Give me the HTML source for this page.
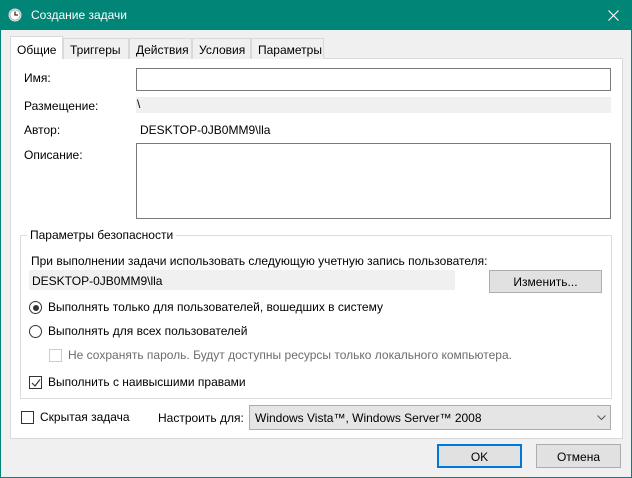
<!DOCTYPE html>
<html><head><meta charset="utf-8"><style>
*{margin:0;padding:0;box-sizing:border-box}
body{width:632px;height:478px;background:#f0f0f0;font:12px "Liberation Sans",sans-serif;color:#000;position:relative;overflow:hidden}
.a{position:absolute;white-space:nowrap}
.win{position:absolute;left:0;top:0;width:632px;height:478px;border:1px solid #008577}
.title{position:absolute;left:0;top:0;width:632px;height:30px;background:#008577;color:#fff;font-size:12px}
.tab{position:absolute;top:38px;height:21px;border:1px solid #d9d9d9;border-bottom:none;background:#f0f0f0;padding:4px 0 0 6px}
.panel{position:absolute;left:10px;top:58px;width:613px;height:381px;background:#fff;border:1px solid #d9d9d9}
.inp{position:absolute;background:#fff;border:1px solid #7a7a7a}
.gray{position:absolute;background:#f0f0f0}
.btn{position:absolute;background:#e1e1e1;border:1px solid #adadad;text-align:center}
.radio{position:absolute;width:13px;height:13px;border:1px solid #333;border-radius:50%;background:#fff}
.cb{position:absolute;width:13px;height:13px;border:1px solid #333;background:#fff}
</style></head><body>
<div class="win"></div>
<div class="title">
 <svg class="a" style="left:8px;top:8px" width="14" height="14" viewBox="0 0 14 14"><circle cx="7" cy="7" r="6.5" fill="#ddd"/><circle cx="7" cy="7" r="5" fill="#fff" stroke="#999" stroke-width=".6"/><path d="M7 3.5V7H10" stroke="#333" stroke-width="1.3" fill="none"/></svg>
 <div class="a" style="left:31px;top:8px">Создание задачи</div>
 <svg class="a" style="left:608px;top:10px" width="11" height="11" viewBox="0 0 11 11"><path d="M0.5 0.5L10.5 10.5M10.5 0.5L0.5 10.5" stroke="#fff" stroke-width="1.1"/></svg>
</div>
<div class="panel"></div>
<div class="tab" style="left:10px;top:36px;height:23px;width:53px;background:#fff;padding-top:6px">Общие</div>
<div class="tab" style="left:63px;width:66px">Триггеры</div>
<div class="tab" style="left:129px;width:63px">Действия</div>
<div class="tab" style="left:192px;width:59px">Условия</div>
<div class="tab" style="left:251px;width:73px">Параметры</div>

<div class="a" style="left:24px;top:71px">Имя:</div>
<div class="inp" style="left:136px;top:68px;width:475px;height:23px"></div>
<div class="a" style="left:24px;top:99px">Размещение:</div>
<div class="gray" style="left:136px;top:97px;width:475px;height:16px"></div>
<div class="a" style="left:137px;top:97px">\</div>
<div class="a" style="left:24px;top:123px">Автор:</div>
<div class="a" style="left:140px;top:123px">DESKTOP-0JB0MM9\lla</div>
<div class="a" style="left:24px;top:148px">Описание:</div>
<div class="inp" style="left:136px;top:143px;width:475px;height:76px"></div>

<div class="a" style="left:20px;top:235px;width:592px;height:164px;border:1px solid #dcdcdc"></div>
<div class="a" style="left:27px;top:228px;background:#fff;padding:0 3px">Параметры безопасности</div>
<div class="a" style="left:31px;top:254px">При выполнении задачи использовать следующую учетную запись пользователя:</div>
<div class="gray" style="left:29px;top:270px;width:426px;height:20px"></div>
<div class="a" style="left:32px;top:274px">DESKTOP-0JB0MM9\lla</div>
<div class="btn" style="left:489px;top:270px;width:113px;height:23px;padding-top:4px">Изменить...</div>
<div class="radio" style="left:29px;top:301px"><div style="position:absolute;left:2.5px;top:2.5px;width:6px;height:6px;border-radius:50%;background:#333"></div></div>
<div class="a" style="left:48px;top:300px">Выполнять только для пользователей, вошедших в систему</div>
<div class="radio" style="left:29px;top:325px"></div>
<div class="a" style="left:48px;top:324px">Выполнять для всех пользователей</div>
<div class="cb" style="left:49px;top:349px;border-color:#ccc"></div>
<div class="a" style="left:68px;top:348px;color:#6d6d6d">Не сохранять пароль. Будут доступны ресурсы только локального компьютера.</div>
<div class="cb" style="left:29px;top:376px"><svg class="a" style="left:1px;top:1px" width="10" height="10" viewBox="0 0 10 10"><path d="M1 5L4 8L9 1.5" stroke="#333" stroke-width="1.2" fill="none"/></svg></div>
<div class="a" style="left:48px;top:375px">Выполнить с наивысшими правами</div>

<div class="cb" style="left:21px;top:411px"></div>
<div class="a" style="left:40px;top:410px">Скрытая задача</div>
<div class="a" style="left:158px;top:411px">Настроить для:</div>
<div class="a" style="left:249px;top:405px;width:362px;height:25px;background:#e5e5e5;border:1px solid #acacac;padding:5px 0 0 5px">Windows Vista™, Windows Server™ 2008
 <svg class="a" style="left:347px;top:9px" width="9" height="6" viewBox="0 0 9 6"><path d="M0.5 0.5L4.5 4.5L8.5 0.5" stroke="#555" fill="none"/></svg></div>

<div class="btn" style="left:437px;top:444px;width:85px;height:24px;border:2px solid #0078d7;padding-top:4px">OK</div>
<div class="btn" style="left:536px;top:444px;width:85px;height:24px;padding-top:5px">Отмена</div>
</body></html>
